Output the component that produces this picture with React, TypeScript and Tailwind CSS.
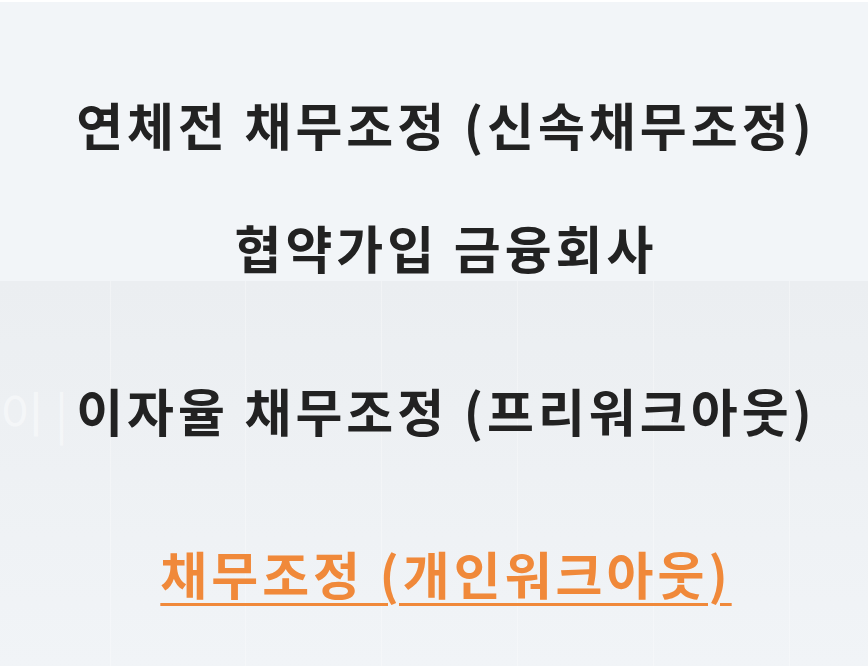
import React from 'react';

const items = [
  { label: '연체전 채무조정 (신속채무조정)', active: false },
  { label: '협약가입 금융회사', active: false },
  { label: '이자율 채무조정 (프리워크아웃)', active: false },
  { label: '채무조정 (개인워크아웃)', active: true },
];

const App = () => {
  return (
    <div className="relative h-[666px] w-[868px] overflow-hidden bg-[#f2f5f8] font-['Noto_Sans_CJK_KR',sans-serif]">
      {/* faint page content behind the menu */}
      <div className="absolute inset-x-0 top-[281px] bottom-0 bg-gradient-to-b from-[#ebeef1] to-[#f1f4f7]">
        <div className="ml-[110px] grid h-full w-[680px] grid-cols-5">
          <div className="border-x border-white/30" />
          <div className="border-r border-white/30" />
          <div className="border-r border-white/30" />
          <div className="border-r border-white/30" />
          <div className="border-r border-white/30" />
        </div>
        <div className="absolute left-[0px] top-[94px] text-[48px] font-normal text-white/45">이 |</div>
      </div>
      <div className="absolute inset-x-0 top-0 h-[2px] bg-white" />

      <nav className="relative flex flex-col items-center pl-[24px] pt-[94px]">
        {items.map((item, i) => (
          <a
            key={i}
            href="#"
            className={`${i === 0 ? '' : i === 1 ? 'mt-[63px]' : 'mt-[103px]'} h-[60px] text-[51px] leading-[60px] font-semibold tracking-[4px] ${
              item.active
                ? 'text-[#f0893a] underline decoration-[3px] underline-offset-[8px]'
                : 'text-[#222222]'
            }`}
          >
            {item.label}
          </a>
        ))}
      </nav>
    </div>
  );
};

export default App;
